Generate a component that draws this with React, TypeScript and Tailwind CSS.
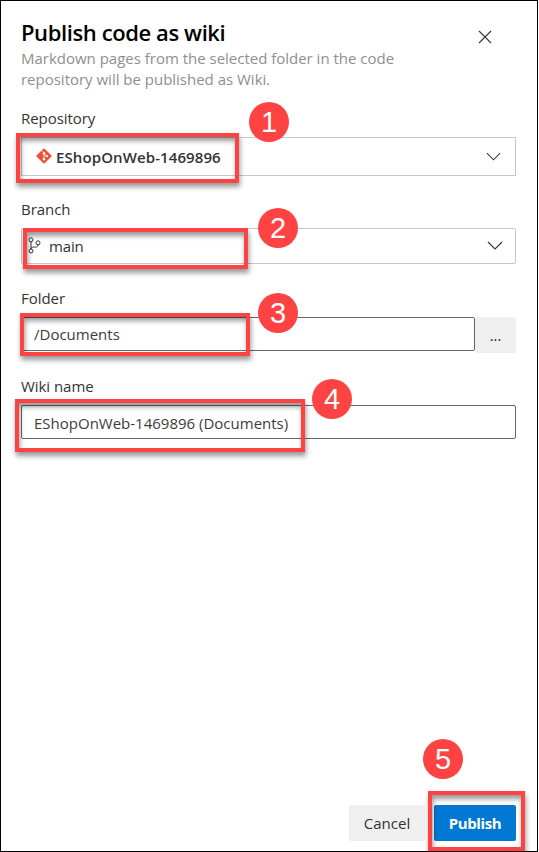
import type { ReactNode } from "react";

function Callout({ className, children }: { className: string; children: ReactNode }) {
  return (
    <span
      className={`absolute z-20 flex size-10 items-center justify-center rounded-full bg-[#ff4343] font-['Liberation_Sans',Arial,sans-serif] text-[29px] leading-none text-white ${className}`}
    >
      {children}
    </span>
  );
}

function Highlight({ className }: { className: string }) {
  return (
    <span
      className={`pointer-events-none absolute z-10 border-4 border-[#ff4343] shadow-[1px_4px_5px_rgba(0,0,0,0.4),inset_1px_4px_5px_rgba(0,0,0,0.4)] ${className}`}
    />
  );
}

function Label({ children }: { children: ReactNode }) {
  return <label className="block h-5 whitespace-nowrap text-[15px] leading-5 tracking-[-0.05px] text-[#333]">{children}</label>;
}

function Chevron({ className }: { className: string }) {
  return (
    <svg className={className} viewBox="0 0 16 9" fill="none" stroke="#333" strokeWidth="1.1">
      <path d="M1 1l7 7 7-7" />
    </svg>
  );
}

function GitIcon() {
  return (
    <svg className="-mt-px size-4" viewBox="0 0 16 16">
      <rect x="2.4" y="2.4" width="11.2" height="11.2" rx="0.9" transform="rotate(45 8 8)" fill="#f05133" />
      <path d="M5.7 2.6L8 5v6.3M8 5.3l3 3" stroke="#fff" strokeWidth="0.9" fill="none" />
      <circle cx="8" cy="5.2" r="1.2" fill="#fff" />
      <circle cx="8" cy="11.2" r="1.2" fill="#fff" />
      <circle cx="10.9" cy="8.1" r="1.2" fill="#fff" />
    </svg>
  );
}

function BranchIcon() {
  return (
    <svg className="-mt-0.5 h-[17px] w-[13px]" viewBox="0 0 13 17" fill="none" stroke="#333" strokeWidth="1">
      <circle cx="3" cy="2.8" r="2" />
      <circle cx="3" cy="14" r="2" />
      <circle cx="10" cy="5.8" r="2" />
      <path d="M3 4.8V12M10 7.8c0 1.7-1 2.3-2.5 2.3h-2C4 10.1 3 10.800 3 12" />
    </svg>
  );
}

export default function App() {
  return (
    <div className="h-[852px] w-[539px] bg-white font-['Open_Sans','Noto_Sans',sans-serif]">
      <main className="flex h-[852px] w-[538px] flex-col border border-black bg-white pl-5 pr-[21px]">
        <header className="flex h-[107px] justify-between pt-4">
          <div>
            <h1 className="h-[31px] whitespace-nowrap text-[22px] font-semibold leading-[30px] tracking-[-0.4px] text-black">
              Publish code as wiki
            </h1>
            <p className="whitespace-nowrap text-[15px] leading-[21px] tracking-[-0.01px] text-[#8f8f8f]">
              Markdown pages from the selected folder in the code
              <br />
              repository will be published as Wiki.
            </p>
          </div>
          <button aria-label="Close" className="mr-6 mt-[13px] size-[14px]">
            <svg className="size-[14px]" viewBox="0 0 14 14" stroke="#333" strokeWidth="1.1">
              <path d="M1 1l12 12M13 1L1 13" />
            </svg>
          </button>
        </header>

        <section className="relative h-[91px]">
          <Label>Repository</Label>
          <div className="mt-[9px] flex h-[39px] items-center border border-[#c8c8c8] px-[14px]">
            <GitIcon />
            <span className="ml-1 flex-1 whitespace-nowrap pt-0.5 text-[15px] font-semibold tracking-[0.1px] text-[#333]">
              EShopOnWeb-1469896
            </span>
            <Chevron className="h-[9px] w-[15px]" />
          </div>
          <Highlight className="-left-[5px] top-[25px] h-[50px] w-[223px]" />
          <Callout className="left-[228px] -top-[6px]">1</Callout>
        </section>

        <section className="relative h-[89px]">
          <Label>Branch</Label>
          <div className="mt-[9px] flex h-9 items-center rounded-[2px] border border-[#c8c8c8] pl-[6px] pr-[12px]">
            <BranchIcon />
            <span className="ml-[8px] flex-1 text-[15px] tracking-[-0.15px] text-[#333]">main</span>
            <Chevron className="-mt-0.5 h-[9px] w-4" />
          </div>
          <Highlight className="left-[2px] top-[29px] h-[41px] w-[225px]" />
          <Callout className="left-[237px] top-[9px]">2</Callout>
        </section>

        <section className="relative h-[88px]">
          <Label>Folder</Label>
          <div className="mt-[9px] flex h-9">
            <div className="flex h-[34px] w-[454px] items-center rounded-[2px] border border-[#666] pl-3 text-[15px] text-[#3c3c3c]">
              /Documents
            </div>
            <button className="flex-1 rounded-[2px] bg-[#efefef] pt-0.5 text-[14.5px] font-medium text-[#222]">...</button>
          </div>
          <Highlight className="-left-px top-[25px] h-[43px] w-[230px]" />
          <Callout className="left-[237px] top-[5px]">3</Callout>
        </section>

        <section className="relative h-[90px]">
          <Label>Wiki name</Label>
          <div className="mt-[9px] flex h-[34px] items-center whitespace-nowrap rounded-[2px] border border-[#666] pl-3 pt-[3px] text-[15px] text-[#3c3c3c]">
            EShopOnWeb-1469896 (Documents)
          </div>
          <Highlight className="-left-[6px] top-[23px] h-[53px] w-[290px]" />
          <Callout className="left-[291px] top-[3px]">4</Callout>
        </section>

        <footer className="relative mb-[10px] mt-auto flex h-9 justify-end">
          <button className="w-[76px] rounded-[2px] bg-[#efefef] text-[15px] font-medium text-[#333]">Cancel</button>
          <button className="ml-[9px] w-[82px] rounded-[2px] bg-[#0078d4] text-[15px] font-bold tracking-[-0.4px] text-white">
            Publish
          </button>
          <Highlight className="-right-[9px] -top-[14px] h-[60px] w-[97px]" />
          <Callout className="right-[53px] -top-[66px]">5</Callout>
        </footer>
      </main>
    </div>
  );
}
